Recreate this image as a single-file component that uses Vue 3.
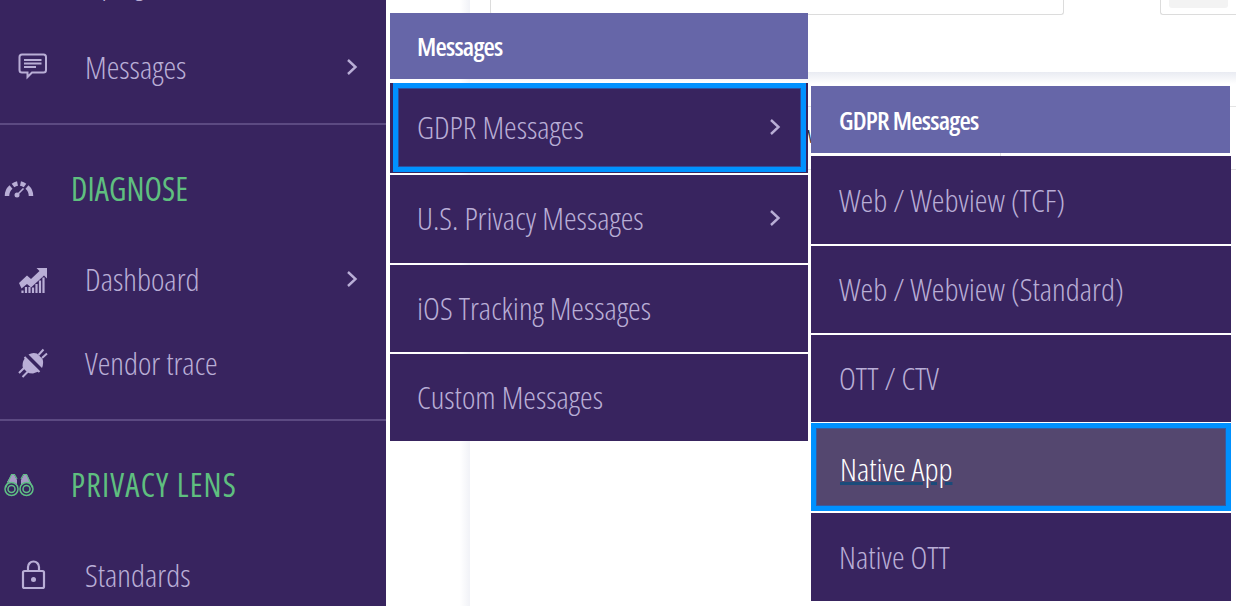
<script setup>
const firstMenu = [
  { label: 'GDPR Messages', chevron: true, ring: true },
  { label: 'U.S. Privacy Messages', chevron: true },
  { label: 'iOS Tracking Messages' },
  { label: 'Custom Messages' }
]
const secondMenu = [
  { label: 'Web / Webview (TCF)' },
  { label: 'Web / Webview (Standard)' },
  { label: 'OTT / CTV' },
  { label: 'Native App', active: true },
  { label: 'Native OTT' }
]
</script>

<template>
  <div class="page">
    <aside class="sidebar">
      <div class="row first"><span class="txt">Campaigns</span></div>
      <div class="row">
        <svg class="icon" viewBox="0 0 30 30"><path d="M4 2.500H25.500Q28 2.500 28 5V18Q28 20.500 25.500 20.500H14L9.500 25V20.500H4Q1.500 20.500 1.500 18V5Q1.500 2.500 4 2.500Z" fill="none" stroke="currentColor" stroke-width="2"/><path d="M6 8H23.500M6 11.500H23.500M6 15H18" stroke="currentColor" stroke-width="1.800"/></svg>
        <span class="txt">Messages</span>
        <svg class="chev" viewBox="0 0 12 18"><path d="M2 2L9.500 9L2 16" fill="none" stroke="currentColor" stroke-width="2.400"/></svg>
      </div>
      <div class="rule"></div>
      <div class="head">
        <svg class="hicon" viewBox="0 0 30 20"><path d="M3 17A12 12 0 0 1 7 8" fill="none" stroke="currentColor" stroke-width="4.500"/><path d="M9 6.500A12 12 0 0 1 13.500 4.500M16.500 4.500A12 12 0 0 1 21 6.500" fill="none" stroke="currentColor" stroke-width="4.500"/><path d="M23 8A12 12 0 0 1 27 17" fill="none" stroke="currentColor" stroke-width="4.500"/><path d="M12.500 16.500L19.500 9.500" stroke="currentColor" stroke-width="1.600"/><circle cx="13" cy="16" r="2.500" fill="currentColor"/></svg>
        <span class="txt green tight">DIAGNOSE</span>
      </div>
      <div class="row">
        <svg class="icon" viewBox="0 0 30 30"><path d="M1 19L9 11.500L13 15L21.500 7L18.500 4H29V14.500L26 11.500L13 23.500L9 20L3.500 24.500Z" fill="currentColor"/><path d="M4.500 29V26.500M8 29V23M11.500 29V23M15 29V23.500M18.500 29V20M22 29V16.500M25.500 29V13.500" stroke="currentColor" stroke-width="2.200"/></svg>
        <span class="txt">Dashboard</span>
        <svg class="chev" viewBox="0 0 12 18"><path d="M2 2L9.500 9L2 16" fill="none" stroke="currentColor" stroke-width="2.400"/></svg>
      </div>
      <div class="row">
        <svg class="icon" viewBox="0 0 30 30"><path d="M6.500 9L21.500 24" stroke="currentColor" stroke-width="2"/><path d="M10.500 6.500L24 20Q26 15 24.500 11L19 5.500Q14.500 4 10.500 6.500ZM7 10L20.500 23.500L15 25.500Q11 25.500 9 24L5 20Q3.500 15 7 10Z" fill="currentColor"/><path d="M20.500 7L25.500 1.500M24 10L29 5.500M6.500 19.500L1 25M10 23.500L4.500 29" stroke="currentColor" stroke-width="2"/></svg>
        <span class="txt">Vendor trace</span>
      </div>
      <div class="rule"></div>
      <div class="head">
        <svg class="hicon tall" viewBox="0 0 30 24"><path d="M17 7L20 1.500H23L28 12L17 13ZM13 7L10 1.500H7.500L3 9L13 11Z" fill="#b9aed6" opacity=".85"/><g fill="#38245f" stroke="#5fbf85" stroke-width="1.500"><circle cx="7.500" cy="16" r="6.500"/><circle cx="7.500" cy="16" r="3.500"/><circle cx="22.500" cy="16" r="6.500"/><circle cx="22.500" cy="16" r="3.500"/></g><path d="M13 6L10.500 1.500H7.500L1.500 15M17 6L19.500 1.500H22.500L28.500 15" fill="none" stroke="#5fbf85" stroke-width="1.200"/></svg>
        <span class="txt green wide">PRIVACY LENS</span>
      </div>
      <div class="row">
        <svg class="icon" viewBox="0 0 30 30"><rect x="5" y="11" width="21" height="17" rx="1.500" fill="none" stroke="currentColor" stroke-width="2.200"/><path d="M10 11V7A5.500 5.500 0 0 1 21 7V11" fill="none" stroke="currentColor" stroke-width="2.200"/><circle cx="15.500" cy="19.500" r="2.500" fill="currentColor"/></svg>
        <span class="txt">Standards</span>
      </div>
    </aside>

    <div class="gutter"></div>

    <main class="content">
      <header class="topbar">
        <div class="field"></div>
        <div class="field-small"><div class="chip"></div></div>
      </header>
      <section class="table">
        <div class="cell"><span class="peek">W</span></div>
        <div class="cell last"></div>
      </section>
    </main>

    <nav class="menu menu-one">
      <div class="mhead"><span class="txt hd">Messages</span></div>
      <div v-for="item in firstMenu" :key="item.label" class="mitem" :class="{ ring: item.ring }">
        <span class="txt">{{ item.label }}</span>
        <svg v-if="item.chevron" class="chev mchev" viewBox="0 0 12 18"><path d="M2 2L9.500 9L2 16" fill="none" stroke="currentColor" stroke-width="2.400"/></svg>
      </div>
    </nav>

    <nav class="menu menu-two">
      <div class="mhead"><span class="txt hd">GDPR Messages</span></div>
      <div v-for="item in secondMenu" :key="item.label" class="mitem" :class="{ current: item.active }">
        <span class="txt">{{ item.label }}</span>
      </div>
    </nav>
  </div>
</template>

<style>
html, body { margin: 0; background: #fff; overflow: hidden; }
</style>

<style scoped>
.page {
  position: relative;
  display: flex;
  width: 1236px;
  height: 606px;
  overflow: hidden;
  background: #fff;
  font-family: "Open Sans", "Liberation Sans", sans-serif;
  font-stretch: 75%;
}
.txt {
  font-size: 32px;
  font-weight: 300;
  line-height: 36px;
  white-space: nowrap;
}
.sidebar {
  flex: 0 0 386px;
  margin-top: -58px;
  background: #38245f;
  color: #b9aed6;
}
.row {
  display: flex;
  align-items: center;
  height: 84px;
  padding: 0 28px 2px 18px;
  box-sizing: border-box;
}
.row.first { padding-bottom: 5px; }
.row .txt { flex: 1; margin-left: 37px; }
.icon { width: 30px; height: 30px; flex: none; }
.chev { width: 12px; height: 18px; flex: none; }
.rule { height: 2px; margin-top: 13px; background: #5c4a82; }
.head {
  display: flex;
  align-items: center;
  height: 64px;
  margin: 32px 0 17px;
  padding-left: 4px;
}
.hicon { width: 30px; height: 22px; flex: none; }
.hicon.tall { height: 24px; }
.green { margin-left: 37px; color: #5fbf7f; font-weight: 400; }
.tight { letter-spacing: .1px; }
.wide { letter-spacing: 1.2px; }
.gutter {
  flex: 0 0 84px;
  background: linear-gradient(90deg, #fff 88%, #f1f2f7 100%);
}
.content { flex: 1; min-width: 0; }
.topbar {
  display: flex;
  justify-content: space-between;
  height: 71px;
  padding: 0 0 0 20px;
  box-sizing: border-box;
  background: #fff;
}
.field {
  width: 574px;
  height: 15px;
  box-sizing: border-box;
  border: 1px solid #dcdcdc;
  border-top: 0;
  border-radius: 0 0 3px 3px;
}
.field-small {
  width: 76px;
  height: 15px;
  box-sizing: border-box;
  padding-left: 8px;
  border: 1px solid #dcdcdc;
  border-top: 0;
  border-right: 0;
  border-radius: 0 0 0 3px;
}
.chip { width: 59px; height: 8px; background: #f3f3f3; border-radius: 0 0 3px 3px; }
.table {
  display: flex;
  height: 62px;
  margin-top: 35px;
  margin-left: 120px;
  border-top: 1px solid #e4e4e4;
  border-bottom: 1px solid #e4e4e4;
  position: relative;
}
.table::before {
  content: "";
  position: absolute;
  left: -120px;
  right: 0;
  top: -35px;
  height: 12px;
  background: linear-gradient(180deg, #e9ebf2, #fff);
}
.cell { width: 411px; box-sizing: border-box; padding: 18px 0 0 212px; border-right: 1px solid #e4e4e4; }
.cell.last { flex: 1; padding: 0; border-right: 0; }
.peek { font-size: 18px; line-height: 22px; color: #333; }

.menu {
  position: absolute;
  display: flex;
  flex-direction: column;
  color: #b9aed6;
}
.menu-one { left: 390px; top: 13px; width: 418px; }
.menu-two { left: 811px; top: 86px; width: 420px; }
.mhead, .mitem {
  display: flex;
  align-items: center;
  justify-content: space-between;
  position: relative;
  flex: none;
  box-sizing: border-box;
  padding: 0 28px;
}
.mhead { background: #6666a8; color: #fff; }
.mitem { background: #38245f; margin-top: 2px; height: 87px; }
.menu-one .mhead { height: 66px; padding-left: 27px; }
.menu-one .mitem { padding: 0 28px 2px 27px; }
.menu-one .mitem:nth-child(2) { margin-top: 4px; height: 90px; }
.menu-one .mitem:nth-child(3) { height: 88px; }
.menu-two .mhead { width: 419px; height: 67px; }
.menu-two .mitem { padding-bottom: 1px; }
.menu-two .mitem:nth-child(2) { margin-top: 3px; height: 88px; }
.menu-two .mitem:nth-child(5) { margin-top: 1px; height: 88px; }
.menu-two .mitem:nth-child(6) { height: 88px; }
.mchev { margin-right: -1px; }
.hd { font-size: 26px; font-weight: 600; letter-spacing: -.8px; }
.ring::after {
  content: "";
  position: absolute;
  inset: 0 2px 1px 3px;
  border: 5px solid #0091ff;
  box-shadow: inset 0 0 0 1px #2b4f9f;
}
.menu-two .current {
  background: #54476f;
  color: #fff;
  border: 5px solid #0091ff;
  padding: 3px 24px 0;
  box-shadow: inset 0 0 0 1px #3a5a9f;
}
.current .txt { font-weight: 340; text-decoration: underline; text-decoration-color: #1a4b7a; text-underline-offset: 1px; }
</style>
